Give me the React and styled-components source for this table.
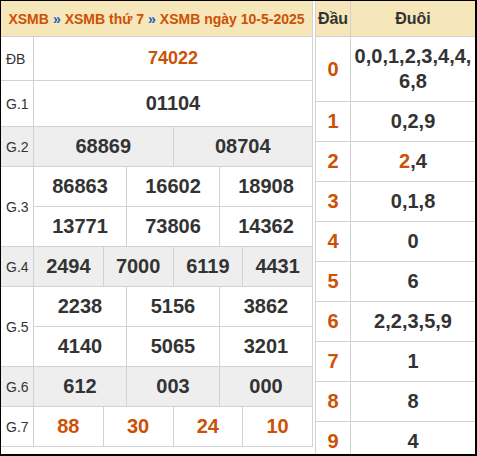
import React from 'react'
import styled, { createGlobalStyle } from 'styled-components'

const GlobalStyle = createGlobalStyle`
  html, body {
    margin: 0;
    padding: 0;
    background: #fff;
  }
  body {
    font-family: "Liberation Sans", Arial, sans-serif;
    color: #333;
  }
`

const Frame = styled.div`
  box-sizing: border-box;
  width: 477px;
  height: 456px;
  border-top: 1px solid #000;
  border-left: 1px solid #000;
  border-right: 2px solid #000;
  border-bottom: 2px solid #000;
  overflow: hidden;
  display: flex;
  gap: 2px;
  align-items: flex-start;
`

const ResultTable = styled.div`
  flex: 0 0 312px;
  display: grid;
  grid-template-columns: 33px repeat(12, 1fr);
  grid-template-rows: 36px 44px 46px repeat(9, 40px);
`

const Cell = styled.div`
  box-sizing: border-box;
  grid-column: span ${p => p.$span || 1};
  grid-row: span ${p => p.$rows || 1};
  border-right: 1px solid #d2d2d2;
  border-bottom: 1px solid #d2d2d2;
  background: ${p => (p.$alt ? '#eeeeee' : '#fff')};
  display: flex;
  align-items: center;
  justify-content: center;
  font-weight: bold;
  font-size: ${p => p.$size || 20}px;
  color: ${p => (p.$hot ? '#cc5105' : '#333')};
  white-space: nowrap;
`

const Label = styled(Cell)`
  justify-content: flex-start;
  padding-left: 5px;
  font-weight: normal;
  font-size: 14px;
  color: #333;
`

const Title = styled(Cell)`
  grid-column: 1 / -1;
  background: #f6e7ba;
  font-size: 14px;
  color: #cc5105;
`

const Sep = styled.span`
  color: #1f5fc4;
  margin: 0 4px;
`

const LotoTable = styled.div`
  flex: 0 0 161px;
  display: grid;
  grid-template-columns: 35px 1fr;
  grid-auto-rows: auto;
  border-left: 1px solid #d2d2d2;
  box-sizing: border-box;
`

const HeadCell = styled.div`
  box-sizing: border-box;
  height: 36px;
  background: #f6e7ba;
  border-right: 1px solid #d2d2d2;
  border-bottom: 1px solid #d2d2d2;
  display: flex;
  align-items: center;
  justify-content: center;
  font-weight: bold;
  font-size: 16px;
  color: #333;
  white-space: nowrap;
`

const LotoCell = styled.div`
  box-sizing: border-box;
  border-right: 1px solid #d2d2d2;
  border-bottom: 1px solid #d2d2d2;
  padding: 7px 2px;
  line-height: 25px;
  min-height: 40px;
  display: flex;
  align-items: center;
  justify-content: center;
  text-align: center;
  font-weight: bold;
  font-size: 20px;
  color: ${p => (p.$hot ? '#cc5105' : '#333')};
`

const Tail = styled.span`
  color: ${p => (p.$hot ? '#cc5105' : '#333')};
`

const prizes = [
  { label: 'ĐB', rows: [['74022']], hot: true, size: 18 },
  { label: 'G.1', rows: [['01104']] },
  { label: 'G.2', rows: [['68869', '08704']], alt: true },
  { label: 'G.3', rows: [['86863', '16602', '18908'], ['13771', '73806', '14362']] },
  { label: 'G.4', rows: [['2494', '7000', '6119', '4431']], alt: true },
  { label: 'G.5', rows: [['2238', '5156', '3862'], ['4140', '5065', '3201']] },
  { label: 'G.6', rows: [['612', '003', '000']], alt: true },
  { label: 'G.7', rows: [['88', '30', '24', '10']], hot: true },
]

const loto = [
  ['0', '0', '1', '2', '3', '4', '4', '6', '8'],
  ['0', '2', '9'],
  ['2', '4'],
  ['0', '1', '8'],
  ['0'],
  ['6'],
  ['2', '2', '3', '5', '9'],
  ['1'],
  ['8'],
  ['4'],
]

export default function App() {
  return (
    <>
      <GlobalStyle />
      <Frame>
        <ResultTable>
          <Title>
            XSMB<Sep>»</Sep>XSMB thứ 7<Sep>»</Sep>XSMB ngày 10-5-2025
          </Title>
          {prizes.map(p => (
            <React.Fragment key={p.label}>
              <Label $rows={p.rows.length} $alt={p.alt}>{p.label}</Label>
              {p.rows.map(row =>
                row.map(n => (
                  <Cell key={n} $span={12 / row.length} $alt={p.alt} $hot={p.hot} $size={p.size}>
                    {n}
                  </Cell>
                ))
              )}
            </React.Fragment>
          ))}
        </ResultTable>
        <LotoTable>
          <HeadCell>Đầu</HeadCell>
          <HeadCell>Đuôi</HeadCell>
          {loto.map((tails, head) => (
            <React.Fragment key={head}>
              <LotoCell $hot>{head}</LotoCell>
              <LotoCell>
                <span>
                  {tails.map((t, i) => (
                    <React.Fragment key={i}>
                      <Tail $hot={head === 2 && i === 0}>{t}</Tail>
                      {i < tails.length - 1 && ','}
                      {i < tails.length - 1 && <wbr />}
                    </React.Fragment>
                  ))}
                </span>
              </LotoCell>
            </React.Fragment>
          ))}
        </LotoTable>
      </Frame>
    </>
  )
}
